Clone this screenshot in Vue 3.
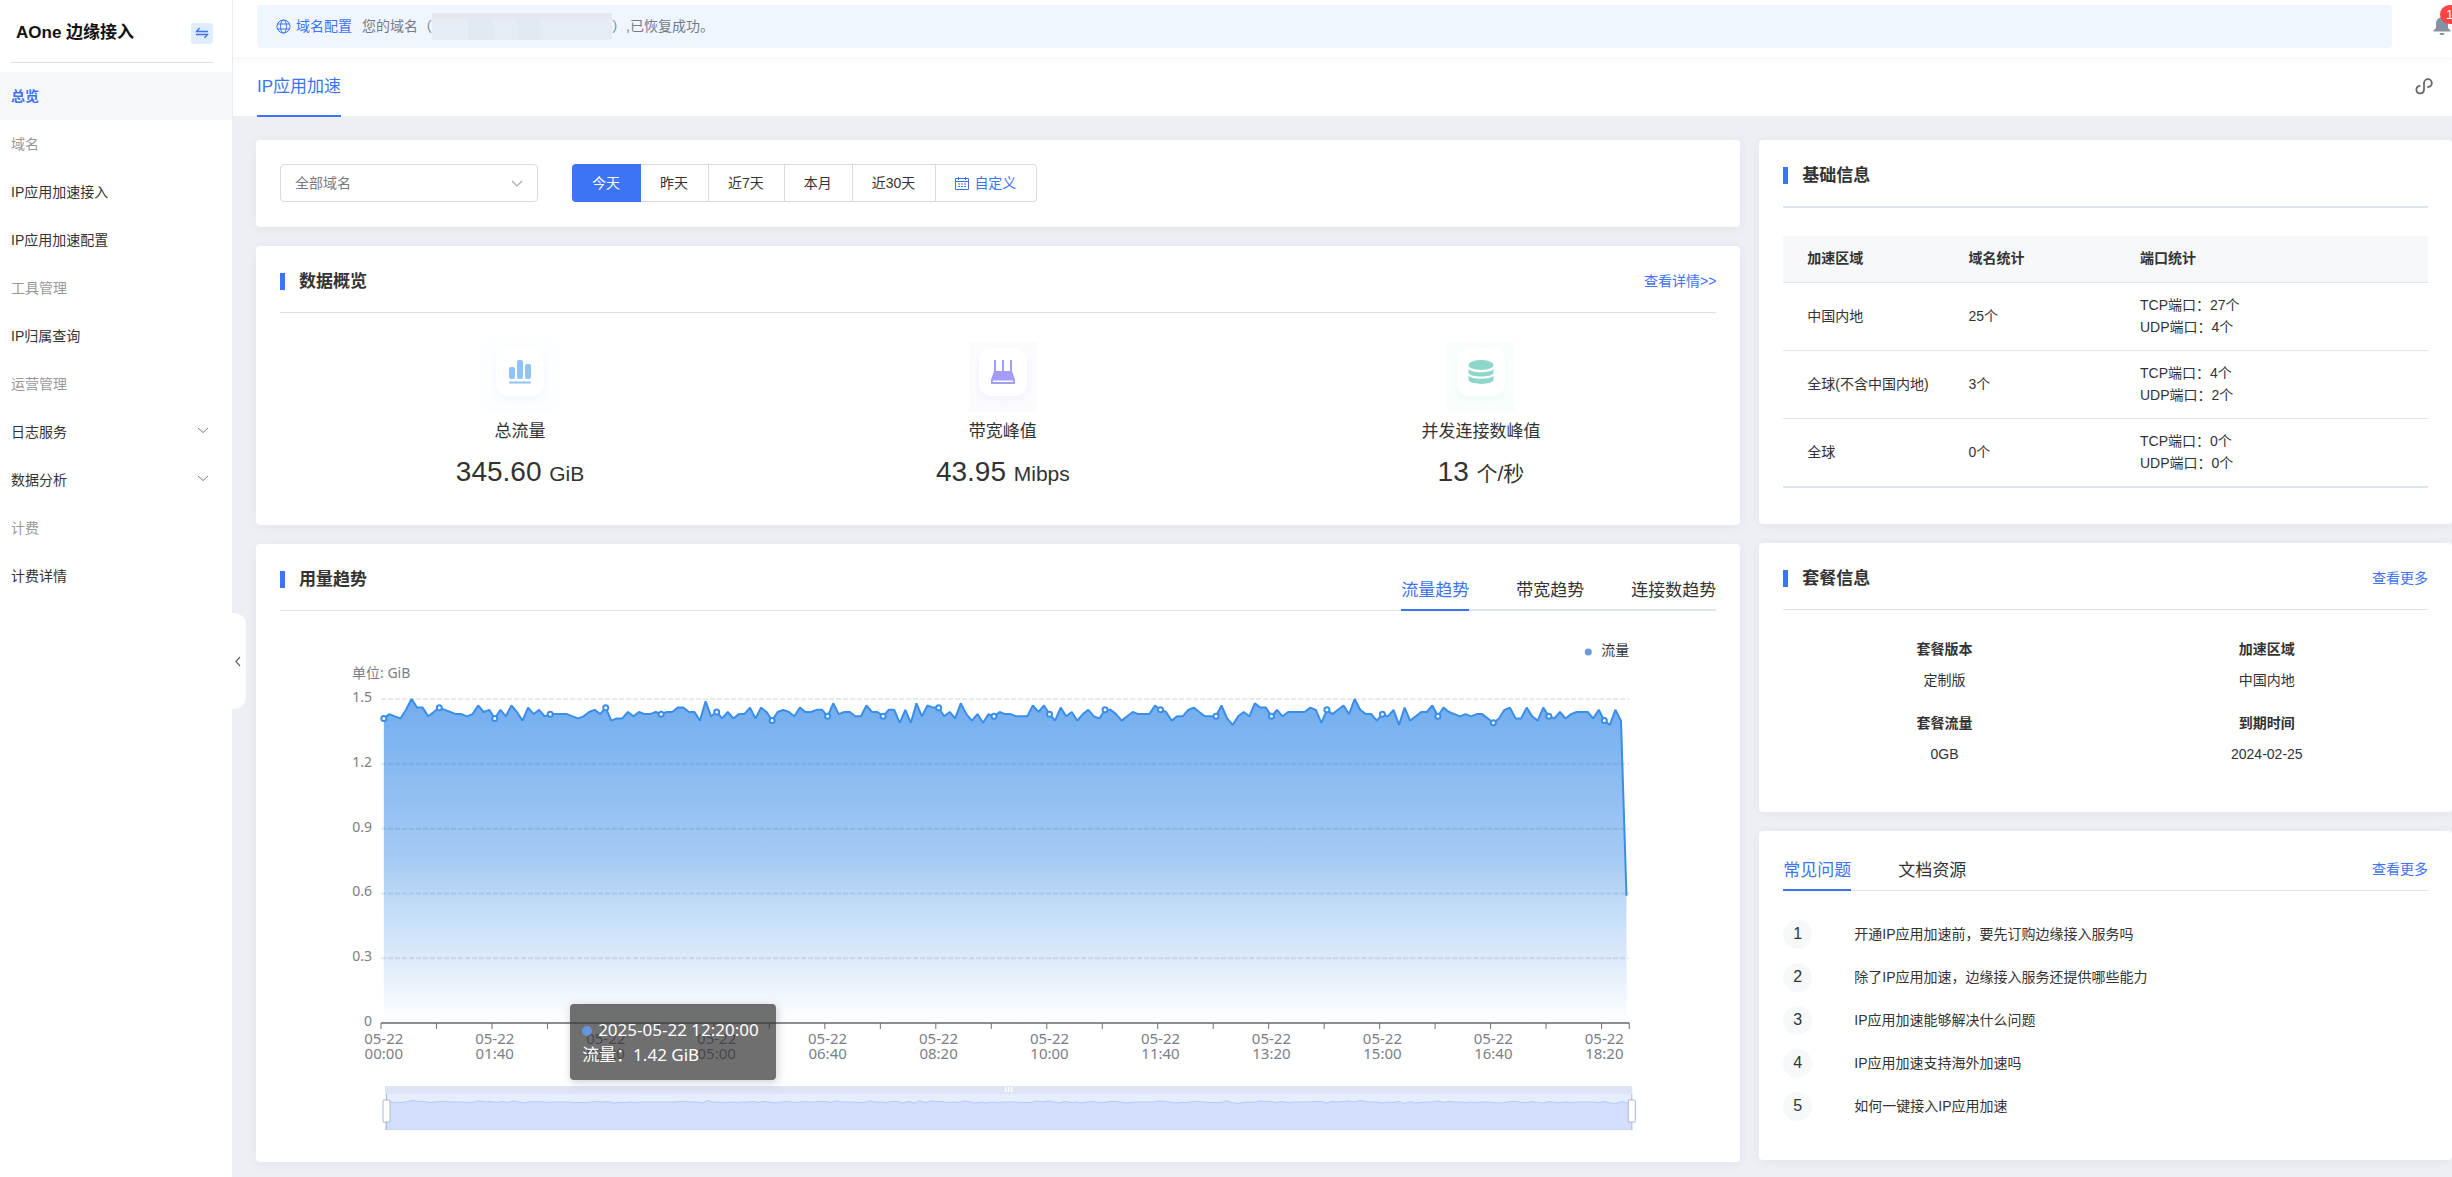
<script setup>
import { ref, computed } from 'vue'

const menu = [
  { text: '总览', active: true },
  { text: '域名', group: true },
  { text: 'IP应用加速接入' },
  { text: 'IP应用加速配置' },
  { text: '工具管理', group: true },
  { text: 'IP归属查询' },
  { text: '运营管理', group: true },
  { text: '日志服务', expandable: true },
  { text: '数据分析', expandable: true },
  { text: '计费', group: true },
  { text: '计费详情' },
]

const ranges = ['今天', '昨天', '近7天', '本月', '近30天']
const range = ref('今天')

const trendTabs = ['流量趋势', '带宽趋势', '连接数趋势']
const trend = ref('流量趋势')
const helpTabs = ['常见问题', '文档资源']
const help = ref('常见问题')

const stats = [
  { kind: 'flow', label: '总流量', value: '345.60', unit: 'GiB' },
  { kind: 'band', label: '带宽峰值', value: '43.95', unit: 'Mibps' },
  { kind: 'conn', label: '并发连接数峰值', value: '13', unit: '个/秒' },
]

const regions = [
  { name: '中国内地', domains: 25, tcp: 27, udp: 4 },
  { name: '全球(不含中国内地)', domains: 3, tcp: 4, udp: 2 },
  { name: '全球', domains: 0, tcp: 0, udp: 0 },
]

const plan = [
  { label: '套餐版本', value: '定制版' },
  { label: '加速区域', value: '中国内地' },
  { label: '套餐流量', value: '0GB' },
  { label: '到期时间', value: '2024-02-25' },
]

const faqs = [
  '开通IP应用加速前，要先订购边缘接入服务吗',
  '除了IP应用加速，边缘接入服务还提供哪些能力',
  'IP应用加速能够解决什么问题',
  'IP应用加速支持海外加速吗',
  '如何一键接入IP应用加速',
]

// Traffic per five minutes, in hundredths of a GiB
const traffic = [
  141, 143, 142, 141, 145, 150, 146, 146, 142, 144, 146, 145, 144, 143, 143, 142, 143, 147, 144, 145,
  141, 145, 142, 147, 144, 140, 146, 143, 145, 142, 143, 143, 143, 143, 142, 141, 142, 144, 145, 143,
  146, 140, 141, 141, 144, 142, 144, 143, 143, 144, 143, 144, 144, 146, 146, 144, 144, 140, 149, 142,
  144, 141, 144, 141, 143, 143, 146, 141, 146, 144, 140, 144, 145, 144, 142, 146, 144, 144, 145, 145,
  142, 148, 143, 144, 144, 142, 142, 147, 144, 144, 142, 145, 145, 139, 145, 139, 148, 142, 147, 146,
  146, 142, 144, 141, 148, 143, 140, 143, 139, 143, 142, 144, 143, 143, 142, 142, 142, 147, 144, 147,
  143, 140, 146, 142, 144, 140, 143, 145, 142, 141, 145, 145, 143, 140, 142, 144, 143, 143, 143, 147,
  145, 144, 140, 142, 142, 145, 146, 144, 142, 142, 142, 147, 141, 138, 142, 144, 142, 148, 146, 146,
  142, 145, 142, 144, 144, 144, 144, 146, 145, 139, 145, 143, 145, 147, 143, 150, 145, 143, 143, 140,
  143, 142, 145, 138, 146, 140, 142, 144, 144, 147, 142, 146, 144, 143, 142, 143, 142, 143, 143, 141,
  139, 141, 145, 146, 141, 141, 146, 142, 140, 146, 142, 141, 144, 141, 143, 144, 144, 144, 141, 145,
  140, 138, 145, 140, 59,
]

const left = 101
const right = 1349
const base = 411
const step = (right - left) / traffic.length
const px = (i) => left + step * (i + 0.5)
const py = (v) => base - v * 2.16

const line = computed(() => traffic.map((v, i) => `${px(i).toFixed(1)},${py(v).toFixed(1)}`).join(' '))
const area = computed(() => `${px(0)},${base} ${line.value} ${px(traffic.length - 1)},${base}`)
const dots = traffic.map((v, i) => ({ x: px(i), y: py(v) })).filter((d, i) => i % 10 === 0 && i < 224)
const grid = [1.5, 1.2, 0.9, 0.6, 0.3, 0].map((v) => ({ v, y: py(v * 100) }))
const ticks = [...Array(23).keys()].map((k) => left + step * 10 * k).concat(right)
const labels = [...Array(12).keys()].map((k) => {
  const m = k * 100
  const pad = (n) => String(n).padStart(2, '0')
  return { x: px(k * 20), time: `${pad(Math.floor(m / 60))}:${pad(m % 60)}` }
})
const mini = computed(() =>
  traffic.slice(0, 224).map((v, i) => `${(105 + i * 5.57).toFixed(1)},${(490 - (v - 143) * 0.25).toFixed(1)}`).join(' ')
)
</script>

<template>
  <div class="app">
    <aside class="side">
      <div class="brand">
        <strong>AOne 边缘接入</strong>
        <button class="swap" type="button" aria-label="切换">
          <svg width="14" height="12" viewBox="0 0 14 12" fill="none" stroke="#3d73f5" stroke-width="1.3">
            <path d="M13 4.500H1.500L4.500 1M1 7.500h11.500L9.500 11" />
          </svg>
        </button>
      </div>
      <nav class="menu">
        <template v-for="m in menu" :key="m.text">
          <span v-if="m.group" class="item group">{{ m.text }}</span>
          <a v-else href="#" class="item" :class="{ active: m.active }">
            {{ m.text }}
            <svg v-if="m.expandable" width="12" height="7" viewBox="0 0 12 7" fill="none" stroke="#777" stroke-width="1">
              <path d="M1 1l5 4.500L11 1" />
            </svg>
          </a>
        </template>
      </nav>
      <button class="knob" type="button" aria-label="收起">
        <svg width="6" height="11" viewBox="0 0 6 11" fill="none" stroke="#666" stroke-width="1.200">
          <path d="M5 1L1 5.500L5 10" />
        </svg>
      </button>
    </aside>

    <main class="main">
      <header class="top">
        <div class="notice">
          <svg width="15" height="15" viewBox="0 0 15 15" fill="none" stroke="#3d73f5" stroke-width="1">
            <circle cx="7.500" cy="7.500" r="6.500" />
            <ellipse cx="7.500" cy="7.500" rx="3" ry="6.500" />
            <path d="M1.500 5h12M1.500 10h12" />
          </svg>
          <a href="#">域名配置</a>
          <span class="msg">您的域名（<i class="mask"></i>）,已恢复成功。</span>
        </div>
        <button class="bell" type="button" aria-label="消息">
          <svg width="18" height="19" viewBox="0 0 18 19" fill="#8592a6">
            <path d="M9 0a1.500 1.500 0 0 1 1.500 1.600C13.500 2.300 15 4.600 15 7.500V12l2.500 2.500V15.500H.5V14.500L3 12V7.500C3 4.600 4.500 2.300 7.500 1.600A1.500 1.500 0 0 1 9 0zM6.500 17h5a2.500 2.200 0 0 1-5 0z" />
          </svg>
          <span class="badge">1</span>
        </button>
      </header>

      <div class="pagebar">
        <a href="#" class="pagetab">IP应用加速</a>
        <svg width="18" height="17" viewBox="0 0 18 17" fill="none" stroke="#666" stroke-width="1.800" stroke-linecap="round">
          <path d="M4.800 7.800A3.800 3.800 0 1 0 9 12V5A3.900 3.900 0 1 1 13 9" />
        </svg>
      </div>

      <div class="content">
        <div class="col wide">
          <section class="card filter">
            <label class="select">
              <select aria-label="域名">
                <option>全部域名</option>
              </select>
              <svg width="12" height="7" viewBox="0 0 12 7" fill="none" stroke="#a5a9b0" stroke-width="1.100">
                <path d="M1 1l5 5l5-5" />
              </svg>
            </label>
            <div class="ranges">
              <button v-for="r in ranges" :key="r" type="button" :class="{ on: r === range }" @click="range = r">{{ r }}</button>
              <button type="button" class="custom">
                <svg width="14" height="13" viewBox="0 0 14 13" fill="none" stroke="#3d73f5" stroke-width="1">
                  <path d="M.5 1.500h13v11H.5zM.5 4.500h13M3.500 0v3M10.500 0v3" />
                  <path d="M3 7h8M3 9.500h8" stroke-dasharray="2 1" />
                </svg>
                自定义
              </button>
            </div>
          </section>

          <section class="card">
            <div class="head">
              <h2>数据概览</h2>
              <a href="#">查看详情&gt;&gt;</a>
            </div>
            <div class="stats">
              <div v-for="s in stats" :key="s.kind" class="stat">
                <div class="tint" :class="s.kind">
                  <div class="tile">
                    <svg v-if="s.kind === 'flow'" width="24" height="24" viewBox="0 0 24 24" fill="#8ec5f6">
                      <rect x="1" y="7" width="6" height="12" rx="2" />
                      <rect x="9" y="0" width="6" height="19" rx="2" />
                      <rect x="17" y="4" width="6" height="15" rx="2" />
                      <rect x="1" y="21.500" width="22" height="2" rx="1" />
                    </svg>
                    <svg v-else-if="s.kind === 'band'" width="24" height="24" viewBox="0 0 24 24" fill="#a39cf8">
                      <path d="M3 0h2v11h6V0h2v11h6V0h2v11l3 8.500V24H0v-4.500L3 11zM2 20.500v1.500h20v-1.500z" fill-rule="evenodd" />
                    </svg>
                    <svg v-else width="26" height="24" viewBox="0 0 26 24" fill="#8fd6ca">
                      <ellipse cx="13" cy="5" rx="12.500" ry="5" />
                      <path d="M.5 9c3 4.300 22 4.300 25 0v4c-2 4.800-23 4.800-25 0zM.5 15.500c3 4.300 22 4.300 25 0V20c-2 5.200-23 5.200-25 0z" />
                    </svg>
                  </div>
                </div>
                <div class="label">{{ s.label }}</div>
                <div class="value">{{ s.value }} <small>{{ s.unit }}</small></div>
              </div>
            </div>
          </section>

          <section class="card trend">
            <div class="head">
              <h2>用量趋势</h2>
              <div class="tabs lined" role="tablist">
                <button v-for="t in trendTabs" :key="t" type="button" role="tab" :class="{ on: t === trend }" @click="trend = t">{{ t }}</button>
              </div>
            </div>
            <div class="chart">
              <svg class="plot" viewBox="0 0 1436 538" role="img" aria-label="流量趋势">
                <defs>
                  <linearGradient id="fill" x1="0" y1="0" x2="0" y2="1">
                    <stop offset="0" stop-color="#72adef" />
                    <stop offset=".5" stop-color="#a6cbf4" />
                    <stop offset=".62" stop-color="#bddaf7" />
                    <stop offset=".8" stop-color="#dceafb" />
                    <stop offset="1" stop-color="#ffffff" />
                  </linearGradient>
                </defs>
                <circle cx="1308" cy="40" r="3.500" fill="#6b9ade" />
                <text x="1321" y="43" class="legend">流量</text>
                <text x="72" y="66" class="axis">单位: GiB</text>
                <polygon :points="area" fill="url(#fill)" />
                <g v-for="g in grid" :key="g.v">
                  <line v-if="g.v" :x1="left" :x2="right" :y1="g.y" :y2="g.y" class="dash" />
                  <text x="92" :y="g.y + 3" class="axis end">{{ g.v }}</text>
                </g>
                <path :d="`M${left} ${base}H${right}`" class="base" />
                <path v-for="x in ticks" :key="x" :d="`M${x} ${base}v6`" class="tick" />
                <polyline :points="line" class="line" />
                <circle v-for="d in dots" :key="d.x" :cx="d.x" :cy="d.y" r="2.500" class="dot" />
                <g v-for="l in labels" :key="l.time" class="date">
                  <text :x="l.x" y="432">05-22</text>
                  <text :x="l.x" y="447">{{ l.time }}</text>
                </g>
                <rect x="105" y="474" width="1247" height="8" fill="#dee4f3" />
                <rect x="105" y="482" width="1247" height="36" fill="#e6edfd" />
                <polygon :points="`105,518 ${mini} 1352,490 1352,518`" fill="#d4e0fb" />
                <polyline :points="mini" fill="none" stroke="#b3cbf8" stroke-width="1" />
                <path d="M105 517.500h1247" stroke="#ccd6ee" />
                <path d="M725.500 475v5M728.500 475v5M731.500 475v5" stroke="#fff" stroke-width="1.500" />
                <path d="M106.500 482v36M1351.500 482v36" stroke="#b0bedb" />
                <rect x="103" y="488" width="7" height="22" rx="1" class="handle" />
                <rect x="1348" y="488" width="7" height="22" rx="1" class="handle" />
              </svg>
              <div class="tip">
                <div><i></i>2025-05-22 12:20:00</div>
                <div>流量：1.42 GiB</div>
              </div>
            </div>
          </section>
        </div>

        <div class="col narrow">
          <section class="card">
            <div class="head thick">
              <h2>基础信息</h2>
            </div>
            <table class="table">
              <thead>
                <tr>
                  <th>加速区域</th>
                  <th>域名统计</th>
                  <th>端口统计</th>
                </tr>
              </thead>
              <tbody>
                <tr v-for="r in regions" :key="r.name">
                  <td>{{ r.name }}</td>
                  <td>{{ r.domains }}个</td>
                  <td>TCP端口：{{ r.tcp }}个<br />UDP端口：{{ r.udp }}个</td>
                </tr>
              </tbody>
            </table>
          </section>

          <section class="card">
            <div class="head">
              <h2>套餐信息</h2>
              <a href="#">查看更多</a>
            </div>
            <dl class="plan">
              <div v-for="p in plan" :key="p.label">
                <dt>{{ p.label }}</dt>
                <dd>{{ p.value }}</dd>
              </div>
            </dl>
          </section>

          <section class="card">
            <div class="helphead">
              <div class="tabs" role="tablist">
                <button v-for="t in helpTabs" :key="t" type="button" role="tab" :class="{ on: t === help }" @click="help = t">{{ t }}</button>
              </div>
              <a href="#">查看更多</a>
            </div>
            <ol class="faq">
              <li v-for="(q, i) in faqs" :key="q">
                <span class="num">{{ i + 1 }}</span>
                <a href="#">{{ q }}</a>
              </li>
            </ol>
          </section>
        </div>
      </div>
    </main>
  </div>
</template>

<style>
body {
  background: #eeeff4;
}
</style>

<style scoped>
.app {
  display: flex;
  min-height: 100vh;
  overflow: hidden;
  background: #eeeff4;
  color: #333;
  font: 14px/20px "Liberation Sans", "Noto Sans CJK SC", sans-serif;
}
.app *,
.app *::before {
  box-sizing: border-box;
}
a {
  color: #3d73f5;
  text-decoration: none;
}
button {
  font: inherit;
  color: inherit;
  background: none;
  border: 0;
  padding: 0;
}
svg {
  flex: none;
}

.side {
  position: relative;
  z-index: 2;
  flex: none;
  width: 232px;
  background: #fff;
}
.brand {
  display: flex;
  align-items: center;
  justify-content: space-between;
  height: 63px;
  margin: 0 19px 9px 11px;
  padding: 4px 0 0 5px;
  border-bottom: 1px solid #dfe2ea;
  color: #111;
  font-size: 17px;
}
.swap {
  display: flex;
  align-items: center;
  justify-content: center;
  width: 22px;
  height: 21px;
  border-radius: 3px;
  background: #e0ecff;
}
.menu {
  display: flex;
  flex-direction: column;
}
.item {
  display: flex;
  align-items: center;
  justify-content: space-between;
  height: 48px;
  padding: 0 23px 0 11px;
  color: #333;
}
.item.group {
  color: #999;
}
.item.active {
  background: #f6f8fa;
  color: #3d73f5;
  font-weight: 700;
}
.item svg {
  margin-bottom: 4px;
}
.knob {
  position: absolute;
  left: 100%;
  top: 613px;
  display: flex;
  align-items: center;
  justify-content: center;
  padding-right: 2px;
  width: 14px;
  height: 96px;
  border-radius: 0 12px 12px 0;
  background: #fff;
}

.main {
  flex: 1;
  min-width: 0;
}
.top {
  position: relative;
  z-index: 1;
  display: flex;
  height: 57px;
  padding: 5px 0 9px 24px;
  border-left: 1px solid #ebedf2;
  background: #fff;
  box-shadow: 0 2px 8px rgba(0, 0, 0, 0.05);
}
.notice {
  display: flex;
  flex: 1;
  align-items: center;
  padding: 0 0 1px 19px;
  border-radius: 4px;
  background: #eff6ff;
}
.notice a {
  margin: 0 10px 0 5px;
}
.msg {
  display: flex;
  align-items: center;
  color: #777b84;
}
.mask {
  width: 180px;
  height: 27px;
  border-top: 6px solid #e5e9ef;
  background: linear-gradient(90deg, #e6edf5 20%, #e1e9f2 20% 34%, #e5ecf5 34% 47%, #e1e9f3 47% 60%, #e5ecf6 60%);
}
.bell {
  position: relative;
  display: block;
  width: 20px;
  margin-left: 40px;
  padding-top: 3px;
}
.badge {
  position: absolute;
  left: 8px;
  top: 0;
  width: 24px;
  height: 19px;
  padding-left: 6px;
  border-radius: 10px;
  background: #ff4444;
  color: #fff;
  font-size: 13px;
  line-height: 19px;
  text-align: left;
}
.pagebar {
  display: flex;
  align-items: center;
  justify-content: space-between;
  height: 59px;
  padding: 0 19px 0 24px;
  border-left: 1px solid #ebedf2;
  background: #fff;
}
.pagetab {
  align-self: flex-end;
  height: 60px;
  margin-bottom: -1px;
  border-bottom: 2px solid #3d73f5;
  font-size: 17px;
  line-height: 60px;
}

.content {
  display: flex;
  gap: 19px;
  padding: 24px 0 15px 24px;
}
.col {
  display: flex;
  flex-direction: column;
  gap: 19px;
  min-width: 0;
}
.wide {
  flex: 15 1 0;
}
.narrow {
  flex: 7 1 0;
}
.card {
  padding: 0 24px;
  border-radius: 4px;
  background: #fff;
  box-shadow: 0 2px 12px rgba(60, 70, 100, 0.06);
}
.filter {
  display: flex;
  gap: 34px;
  padding: 24px 24px 25px;
}
.select {
  position: relative;
  width: 258px;
}
.select select {
  appearance: none;
  width: 100%;
  height: 38px;
  padding: 0 14px;
  border: 1px solid #d8dadd;
  border-radius: 4px;
  background: #fff;
  color: #777b84;
  font: inherit;
}
.select svg {
  position: absolute;
  right: 15px;
  top: 16px;
  pointer-events: none;
}
.ranges {
  display: flex;
}
.ranges button {
  display: flex;
  align-items: center;
  gap: 5px;
  height: 38px;
  padding: 0 20px 0 19px;
  border: 1px solid #d8dadd;
  border-left-width: 0;
  background: #fff;
}
.ranges button:first-child {
  padding-left: 20px;
  border-radius: 4px 0 0 4px;
}
.ranges button:last-child {
  border-radius: 0 4px 4px 0;
}
.ranges .on {
  border-color: #3d73f5;
  background: #3d73f5;
  color: #fff;
}
.ranges .custom {
  color: #3d73f5;
}

.head {
  display: flex;
  align-items: center;
  justify-content: space-between;
  height: 67px;
  padding-top: 5px;
  border-bottom: 1px solid #dfe2ea;
}
.head.thick {
  height: 68px;
  border-bottom: 2px solid #e0e4ed;
}
.head > a {
  padding-bottom: 2px;
}
h2 {
  display: flex;
  align-items: center;
  gap: 14px;
  margin: 0;
  font-size: 17px;
  line-height: 26px;
}
h2::before {
  content: "";
  width: 5px;
  height: 17px;
  background: #3d73f5;
}
.tabs {
  display: flex;
  align-self: flex-end;
  gap: 47px;
  font-size: 17px;
}
.tabs button {
  height: 40px;
  border-bottom: 2px solid transparent;
  line-height: 40px;
}
.tabs .on {
  border-color: #3d73f5;
  color: #3d73f5;
}
.tabs.lined {
  margin-bottom: -1px;
  background: linear-gradient(#e0e4ed, #e0e4ed) bottom / 100% 2px no-repeat;
}

.stats {
  display: flex;
  justify-content: space-around;
  padding: 29px 0 33px;
  text-align: center;
}
.tint {
  display: flex;
  justify-content: center;
  width: 68px;
  height: 70px;
  margin: 0 auto;
  padding-top: 6px;
}
.tile {
  display: flex;
  align-items: center;
  justify-content: center;
  width: 48px;
  height: 48px;
  border-radius: 12px;
  background: #fff;
}
.tint.flow {
  background: #fdfeff;
}
.tint.flow .tile {
  box-shadow: 0 4px 10px #eef7ff;
}
.tint.band {
  background: #fbfbff;
}
.tint.band .tile {
  box-shadow: 0 4px 10px #f3f2ff;
}
.tint.conn {
  background: #f9fefd;
}
.tint.conn .tile {
  box-shadow: 0 4px 10px #eefaf7;
}
.label {
  margin-top: 8px;
  font-size: 17px;
  line-height: 24px;
}
.value {
  height: 40px;
  margin-top: 8px;
  font-size: 28px;
  line-height: 40px;
}
.value small {
  font-size: 21px;
}

.trend {
  padding-bottom: 12px;
}
.chart {
  position: relative;
}
.plot {
  display: block;
  width: 100%;
  height: auto;
  margin-top: 1px;
  overflow: visible;
}
.plot text {
  font-family: "Noto Sans", "Noto Sans CJK SC", sans-serif;
  font-size: 14px;
  fill: #7b7e87;
}
.plot .legend {
  fill: #333;
}
.plot .end {
  text-anchor: end;
}
.plot .date text {
  font-size: 15px;
  text-anchor: middle;
}
.dash {
  stroke: rgba(60, 70, 90, 0.12);
  stroke-width: 2;
  stroke-dasharray: 5 2;
}
.base {
  stroke: #8b8d95;
  stroke-width: 2;
}
.tick {
  stroke: #6e7079;
}
.line {
  fill: none;
  stroke: #3a8ee9;
  stroke-width: 2;
  stroke-linejoin: bevel;
}
.dot {
  fill: #fff;
  stroke: #3a8ee9;
  stroke-width: 2;
}
.handle {
  fill: #fff;
  stroke: #acb8d1;
}
.tip {
  position: absolute;
  left: 20.2%;
  top: 392px;
  min-width: 206px;
  height: 76px;
  padding: 13px 12px;
  border-radius: 4px;
  background: rgba(50, 50, 50, 0.7);
  box-shadow: 1px 2px 10px rgba(0, 0, 0, 0.2);
  color: #fff;
  font: 17px/25px "Noto Sans", "Noto Sans CJK SC", sans-serif;
  white-space: nowrap;
}
.tip i {
  display: inline-block;
  width: 10px;
  height: 10px;
  margin-right: 6px;
  border-radius: 50%;
  background: #6595dc;
}

.table {
  width: 100%;
  margin: 28px 0 36px;
  border-bottom: 1px solid #e0e4ed;
  border-spacing: 0;
  table-layout: fixed;
  text-align: left;
}
.table th,
.table td {
  padding: 0 0 2px 24px;
  border-bottom: 1px solid #e0e4ed;
}
.table th {
  height: 47px;
  background: #f6f8fa;
}
.table td {
  height: 68px;
  line-height: 22px;
}
.table th:first-child {
  width: 25%;
}
.table th:nth-child(2) {
  width: 26.6%;
}
.plan {
  display: grid;
  grid-template-columns: 1fr 1fr;
  row-gap: 23px;
  margin: 0;
  padding: 29px 0 48px;
  text-align: center;
}
.plan dt {
  margin-bottom: 11px;
  font-weight: 700;
}
.plan dd {
  margin: 0;
}
.helphead {
  display: flex;
  align-items: center;
  justify-content: space-between;
  height: 60px;
  padding-top: 16px;
  background: linear-gradient(#dfe2ea, #dfe2ea) bottom / 100% 1px no-repeat;
}
.faq {
  display: flex;
  flex-direction: column;
  gap: 14px;
  margin: 0;
  padding: 29px 0 39px;
  list-style: none;
}
.faq li {
  display: flex;
  align-items: center;
  gap: 42px;
}
.faq a {
  padding-bottom: 2px;
  color: #333;
}
.num {
  width: 29px;
  height: 29px;
  border-radius: 50%;
  background: #f6f8fa;
  font-size: 16px;
  line-height: 28px;
  text-align: center;
}
</style>
